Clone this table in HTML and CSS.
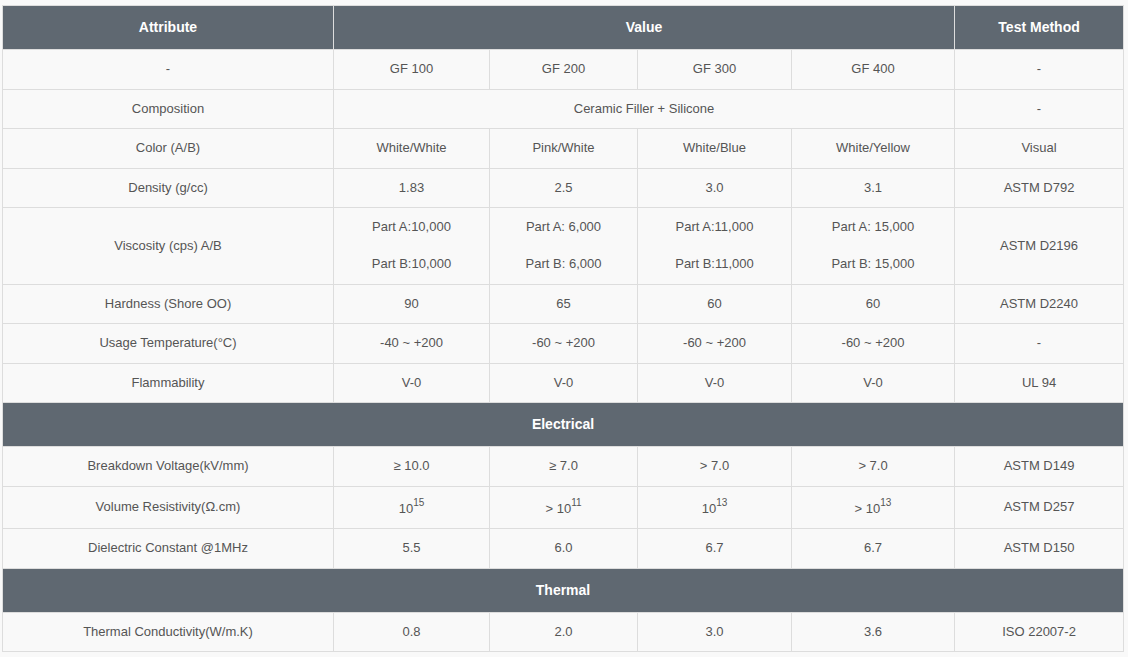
FILE: index.html
```html
<!DOCTYPE html>
<html>
<head>
<meta charset="utf-8">
<link rel="stylesheet" href="styles.css">
</head>
<body>
<table class="spec">
<colgroup>
<col class="c-attr"><col class="c-v1"><col class="c-v2"><col class="c-v3"><col class="c-v4"><col class="c-test">
</colgroup>
<thead>
<tr class="head"><th>Attribute</th><th colspan="4">Value</th><th>Test Method</th></tr>
</thead>
<tbody>
<tr><td>-</td><td>GF 100</td><td>GF 200</td><td>GF 300</td><td>GF 400</td><td>-</td></tr>
<tr><td>Composition</td><td colspan="4">Ceramic Filler + Silicone</td><td>-</td></tr>
<tr><td>Color (A/B)</td><td>White/White</td><td>Pink/White</td><td>White/Blue</td><td>White/Yellow</td><td>Visual</td></tr>
<tr><td>Density (g/cc)</td><td>1.83</td><td>2.5</td><td>3.0</td><td>3.1</td><td>ASTM D792</td></tr>
<tr><td>Viscosity (cps) A/B</td><td>Part A:10,000<br><br>Part B:10,000</td><td>Part A: 6,000<br><br>Part B: 6,000</td><td>Part A:11,000<br><br>Part B:11,000</td><td>Part A: 15,000<br><br>Part B: 15,000</td><td>ASTM D2196</td></tr>
<tr><td>Hardness (Shore OO)</td><td>90</td><td>65</td><td>60</td><td>60</td><td>ASTM D2240</td></tr>
<tr><td>Usage Temperature(°C)</td><td>-40 ~ +200</td><td>-60 ~ +200</td><td>-60 ~ +200</td><td>-60 ~ +200</td><td>-</td></tr>
<tr><td>Flammability</td><td>V-0</td><td>V-0</td><td>V-0</td><td>V-0</td><td>UL 94</td></tr>
<tr class="head"><th colspan="6">Electrical</th></tr>
<tr><td>Breakdown Voltage(kV/mm)</td><td>≥ 10.0</td><td>≥ 7.0</td><td>&gt; 7.0</td><td>&gt; 7.0</td><td>ASTM D149</td></tr>
<tr><td>Volume Resistivity(Ω.cm)</td><td>10<sup>15</sup></td><td>&gt; 10<sup>11</sup></td><td>10<sup>13</sup></td><td>&gt; 10<sup>13</sup></td><td>ASTM D257</td></tr>
<tr><td>Dielectric Constant @1MHz</td><td>5.5</td><td>6.0</td><td>6.7</td><td>6.7</td><td>ASTM D150</td></tr>
<tr class="head"><th colspan="6">Thermal</th></tr>
<tr><td>Thermal Conductivity(W/m.K)</td><td>0.8</td><td>2.0</td><td>3.0</td><td>3.6</td><td>ISO 22007-2</td></tr>
</tbody>
</table>
</body>
</html>
```
FILE: styles.css
```css
html, body {
  margin: 0;
  background: #f9f9f9;
}
body {
  padding: 5px 6px 0 2px;
  font-family: "Liberation Sans", Arial, sans-serif;
  font-size: 13px;
  color: #555;
}
.spec {
  width: 1121px;
  border-collapse: collapse;
  table-layout: fixed;
  background: #f9f9f9;
}
.c-attr { width: 331px; }
.c-v1 { width: 156px; }
.c-v2 { width: 148px; }
.c-v3 { width: 154px; }
.c-v4 { width: 163px; }
.c-test { width: 169px; }
.spec td {
  border: 1px solid #ddd;
  text-align: center;
  vertical-align: middle;
  padding: 10px 8px;
  line-height: 18.5px;
}
.spec th {
  background: #5f6871;
  color: #fff;
  font-weight: bold;
  font-size: 14px;
  border: 1px solid #ddd;
  padding: 12px 8px;
  line-height: 19px;
}
.spec sup {
  font-size: 10px;
  vertical-align: 7px;
  line-height: 12px;
}
```
